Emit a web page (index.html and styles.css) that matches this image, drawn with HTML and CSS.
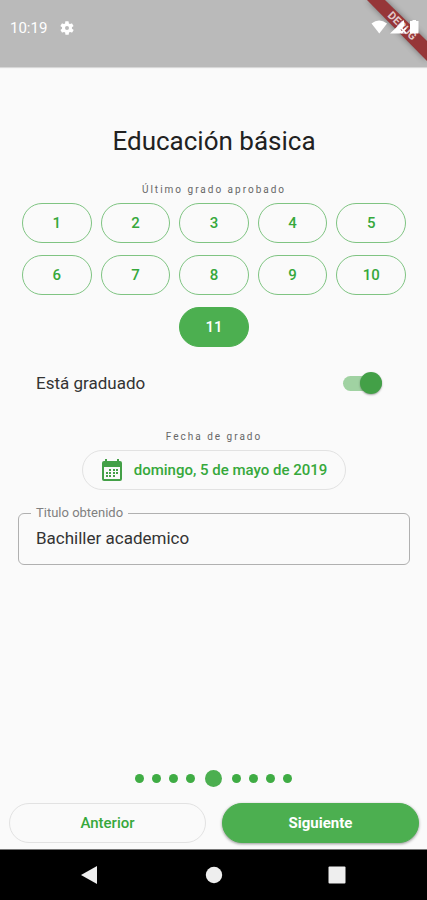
FILE: index.html
```html
<!DOCTYPE html>
<html lang="es">
<head>
<meta charset="utf-8">
<meta name="viewport" content="width=device-width, initial-scale=1">
<title>Educación básica</title>
<link rel="stylesheet" href="styles.css">
</head>
<body>
<div class="screen">
  <header class="status">
    <div class="status-left">
      <span class="clock">10:19</span>
      <svg class="gear" viewBox="0 0 24 24" aria-hidden="true"><path fill="#fff" d="M19.4 13a7.500 7.500 0 0 0 0-2l2.100-1.600a.5.5 0 0 0 .1-.7l-2-3.400a.5.5 0 0 0-.6-.2l-2.500 1a7.300 7.300 0 0 0-1.700-1l-.4-2.700a.5.5 0 0 0-.5-.4h-4a.5.5 0 0 0-.5.4L9.100 5.100a7.300 7.300 0 0 0-1.700 1l-2.500-1a.5.5 0 0 0-.6.2l-2 3.400a.5.5 0 0 0 .1.700L4.600 11a7.500 7.500 0 0 0 0 2l-2.100 1.600a.5.5 0 0 0-.1.700l2 3.400c.1.200.4.3.6.2l2.500-1a7.300 7.300 0 0 0 1.700 1l.4 2.700c0 .2.2.4.5.4h4c.2 0 .5-.2.500-.4l.4-2.700a7.300 7.300 0 0 0 1.700-1l2.500 1c.2.1.5 0 .6-.2l2-3.400a.5.500 0 0 0-.1-.7zM12 15a3 3 0 1 1 0-6 3 3 0 0 1 0 6z"/></svg>
    </div>
    <svg class="corner" viewBox="0 0 67 67" aria-hidden="true">
      <defs>
        <filter id="soft" x="-30%" y="-30%" width="160%" height="160%"><feGaussianBlur stdDeviation="3"/></filter>
      </defs>
      <path d="M7 0H25L67 41V61Z" fill="#000" opacity=".4" filter="url(#soft)"/>
      <path d="M7 0H25L67 41V61Z" fill="#963638"/>
      <text class="ribbon-text" x="0" y="0" transform="translate(42 26) rotate(45)" text-anchor="middle" dominant-baseline="central">DEBUG</text>
      <path fill="#fff" d="M11.500 23.500Q19 17.500 27 23.500L19.300 33.500Z"/>
      <path fill="#fff" d="M44 20V26L40.500 29.500L44 33.500H30Z"/>
      <path fill="#fff" d="M52.500 20H56V21H58.500V33.500H50V21H52.500Z"/>
      <path d="M41 28L46 33M46 28L41 33" stroke="#fff" stroke-width="1.500"/>
    </svg>
  </header>

  <main class="content">
    <h1>Educación básica</h1>

    <p class="overline" id="grade-label">Último grado aprobado</p>
    <div class="grades" role="group" aria-labelledby="grade-label">
      <button type="button" class="pill">1</button>
      <button type="button" class="pill">2</button>
      <button type="button" class="pill">3</button>
      <button type="button" class="pill">4</button>
      <button type="button" class="pill">5</button>
      <button type="button" class="pill">6</button>
      <button type="button" class="pill">7</button>
      <button type="button" class="pill">8</button>
      <button type="button" class="pill">9</button>
      <button type="button" class="pill">10</button>
      <button type="button" class="pill selected" aria-pressed="true">11</button>
    </div>

    <div class="switch-row">
      <label for="graduated">Está graduado</label>
      <input class="switch" id="graduated" type="checkbox" role="switch" checked>
    </div>

    <p class="overline" id="date-label">Fecha de grado</p>
    <button type="button" class="pill date" aria-describedby="date-label">
      <svg class="calendar" viewBox="0 0 22 22" aria-hidden="true">
        <path fill="#43a047" d="M4 0H6V2H16V0H18V2H19Q21 2 21 4V20Q21 22 19 22H3Q1 22 1 20V4Q1 2 3 2H4Z"/>
        <path fill="#fafafa" d="M3 8H19V20H3Z"/>
        <path fill="#43a047" d="M8 10h2v2H8zM12 10h2v2h-2zM15 10h2v2h-2zM5 13h2v2H5zM8 13h2v2H8zM12 13h2v2h-2zM15 13h2v2h-2zM5 16h2v2H5zM8 16h2v2H8zM12 16h2v2h-2z"/>
      </svg>
      <span>domingo, 5 de mayo de 2019</span>
    </button>

    <fieldset class="field">
      <legend><label for="degree">Titulo obtenido</label></legend>
      <input id="degree" type="text" value="Bachiller academico">
    </fieldset>
  </main>

  <div class="dots" role="img" aria-label="Paso 5 de 9">
    <i></i><i></i><i></i><i></i><i class="current"></i><i></i><i></i><i></i><i></i>
  </div>
  <div class="actions">
    <button type="button" class="pill quiet">Anterior</button>
    <button type="button" class="pill primary">Siguiente</button>
  </div>

  <nav class="system" aria-label="Sistema">
    <button type="button" aria-label="Atrás"><svg viewBox="0 0 20 20"><path d="M1 10L17 1V19Z"/></svg></button>
    <button type="button" aria-label="Inicio"><svg viewBox="0 0 20 20"><circle cx="10" cy="10" r="8.200"/></svg></button>
    <button type="button" aria-label="Recientes"><svg viewBox="0 0 20 20"><rect x="1.500" y="1.500" width="17" height="17" rx="1"/></svg></button>
  </nav>
</div>
</body>
</html>
```
FILE: styles.css
```css
* { box-sizing: border-box; }

body {
  margin: 0;
  background: #fafafa;
  color: #212121;
  font-family: Roboto, "Liberation Sans", sans-serif;
}

h1, p { margin: 0; }

button {
  font: inherit;
  cursor: pointer;
}

.screen {
  display: flex;
  flex-direction: column;
  min-height: 100vh;
}

.status {
  position: relative;
  display: flex;
  align-items: center;
  height: 67px;
  padding: 0 10px 12px;
  background: #bababa;
  box-shadow: 0 1px 1px #d8d8d8;
}

.status-left {
  display: flex;
  align-items: center;
  gap: 12px;
}

.clock {
  color: #fff;
  font-size: 15px;
  line-height: 20px;
}

.gear {
  width: 16px;
  height: 16px;
}

.corner {
  position: absolute;
  top: 0;
  right: 0;
  width: 67px;
  height: 67px;
}

.ribbon-text {
  fill: #e3cccc;
  font-size: 11px;
  font-weight: 700;
}

.content {
  display: flex;
  flex: 1;
  flex-direction: column;
  padding: 58px 17px 0 18px;
}

h1 {
  font-size: 26px;
  font-weight: 400;
  line-height: 32px;
  text-align: center;
}

.overline {
  color: #666;
  font-size: 10px;
  letter-spacing: 2px;
  line-height: 12px;
  text-align: center;
}

h1 + .overline { margin-top: 27px; }

.pill {
  display: flex;
  align-items: center;
  justify-content: center;
  height: 40px;
  padding: 0;
  border: 1px solid #7fc482;
  border-radius: 20px;
  background: transparent;
  color: #36a83b;
  font-size: 15px;
  font-weight: 500;
}

.grades {
  display: grid;
  grid-template-columns: repeat(5, 1fr);
  gap: 12px 9px;
  margin-top: 7px;
  padding: 0 4px;
}

.pill.selected {
  grid-column: 3;
  border-color: #4caf50;
  background: #4caf50;
  color: #fff;
}

.switch-row {
  display: flex;
  align-items: center;
  justify-content: space-between;
  margin: 24px 0 36px;
  padding: 0 28px 0 18px;
  color: #333;
  font-size: 17px;
  line-height: 24px;
}

.switch {
  display: flex;
  align-items: center;
  justify-content: flex-end;
  width: 39px;
  height: 15px;
  margin: 0;
  border-radius: 8px;
  appearance: none;
  background: #a0d2a2;
}

.switch::before {
  width: 22px;
  height: 22px;
  border-radius: 50%;
  background: #43a047;
  box-shadow: 0 1px 2px rgb(0 0 0 / 35%);
  content: "";
}

.pill.date {
  align-self: center;
  gap: 11px;
  margin-top: 7px;
  padding: 0 18px;
  border-color: #e2e2e2;
}

.calendar {
  width: 22px;
  height: 22px;
}

.field {
  min-width: 0;
  height: 60px;
  margin: 15px 0 0;
  padding: 0 16px 0 12px;
  border: 1px solid #b0b0b0;
  border-radius: 6px;
}

.field legend {
  padding: 0 5px;
  color: #808080;
  font-size: 13px;
  line-height: 16px;
}

.field input {
  width: 100%;
  padding: 0 0 0 5px;
  border: 0;
  outline: 0;
  background: transparent;
  color: #333;
  font: inherit;
  font-size: 17px;
  line-height: 34px;
}

.dots {
  display: flex;
  align-items: center;
  justify-content: center;
  gap: 8px;
  margin-bottom: 16px;
}

.dots i {
  width: 9px;
  height: 9px;
  border-radius: 50%;
  background: #3fac44;
}

.dots .current {
  width: 17px;
  height: 17px;
  margin: 0 2px;
  background: #4caf50;
}

.actions {
  display: grid;
  grid-template-columns: 1fr 1fr;
  gap: 16px;
  padding: 0 8px 6px 9px;
}

.pill.quiet { border-color: #e2e2e2; }

.pill.primary {
  border-color: #4caf50;
  background: #4caf50;
  box-shadow: 0 1px 3px rgb(0 0 0 / 40%);
  color: #fff;
  font-weight: 700;
}

.system {
  display: flex;
  align-items: center;
  justify-content: space-between;
  height: 51px;
  padding: 0 80px;
  border-top: 1px solid #777;
  background: #000;
}

.system button {
  display: flex;
  padding: 0;
  border: 0;
  background: transparent;
}

.system svg {
  width: 20px;
  height: 20px;
  fill: #eee;
}
```
